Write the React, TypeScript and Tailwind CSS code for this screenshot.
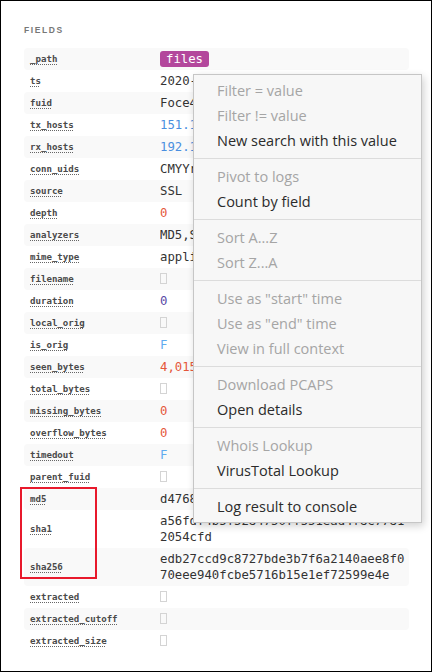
import React from 'react'

type Kind = 'badge' | 'str' | 'ip' | 'num' | 'dur' | 'bool' | 'empty'

interface Field {
  name: string
  kind: Kind
  value?: string
}

const fields: Field[] = [
  { name: '_path', kind: 'badge', value: 'files' },
  { name: 'ts', kind: 'str', value: '2020-04-12T01:33:51.522Z' },
  { name: 'fuid', kind: 'str', value: 'Foce4z2ZlVfzUwhxa3' },
  { name: 'tx_hosts', kind: 'ip', value: '151.101.1.69' },
  { name: 'rx_hosts', kind: 'ip', value: '192.168.1.110' },
  { name: 'conn_uids', kind: 'str', value: 'CMYYrm1TgqaZpA3Ew8' },
  { name: 'source', kind: 'str', value: 'SSL' },
  { name: 'depth', kind: 'num', value: '0' },
  { name: 'analyzers', kind: 'str', value: 'MD5,SHA1,SHA256,X509' },
  { name: 'mime_type', kind: 'str', value: 'application/x-x509-cert' },
  { name: 'filename', kind: 'empty' },
  { name: 'duration', kind: 'dur', value: '0' },
  { name: 'local_orig', kind: 'empty' },
  { name: 'is_orig', kind: 'bool', value: 'F' },
  { name: 'seen_bytes', kind: 'num', value: '4,015' },
  { name: 'total_bytes', kind: 'empty' },
  { name: 'missing_bytes', kind: 'num', value: '0' },
  { name: 'overflow_bytes', kind: 'num', value: '0' },
  { name: 'timedout', kind: 'bool', value: 'F' },
  { name: 'parent_fuid', kind: 'empty' },
  { name: 'md5', kind: 'str', value: 'd47685c1c0e3a2fd5e0e1bcd7f0a6b2e' },
  { name: 'sha1', kind: 'str', value: 'a56fdf4b5f5284750ff551ead4f8c77812054cfd' },
  {
    name: 'sha256',
    kind: 'str',
    value: 'edb27ccd9c8727bde3b7f6a2140aee8f070eee940fcbe5716b15e1ef72599e4e',
  },
  { name: 'extracted', kind: 'empty' },
  { name: 'extracted_cutoff', kind: 'empty' },
  { name: 'extracted_size', kind: 'empty' },
]

const menuGroups: Array<Array<{ label: string; enabled: boolean }>> = [
  [
    { label: 'Filter = value', enabled: false },
    { label: 'Filter != value', enabled: false },
    { label: 'New search with this value', enabled: true },
  ],
  [
    { label: 'Pivot to logs', enabled: false },
    { label: 'Count by field', enabled: true },
  ],
  [
    { label: 'Sort A...Z', enabled: false },
    { label: 'Sort Z...A', enabled: false },
  ],
  [
    { label: 'Use as "start" time', enabled: false },
    { label: 'Use as "end" time', enabled: false },
    { label: 'View in full context', enabled: false },
  ],
  [
    { label: 'Download PCAPS', enabled: false },
    { label: 'Open details', enabled: true },
  ],
  [
    { label: 'Whois Lookup', enabled: false },
    { label: 'VirusTotal Lookup', enabled: true },
  ],
  [{ label: 'Log result to console', enabled: true }],
]

function Value({ field }: { field: Field }) {
  if (field.kind === 'badge') {
    return (
      <span className="inline-block rounded-[3px] bg-[#b3479c] px-[6px] align-top leading-[16px] text-white">
        {field.value}
      </span>
    )
  }
  if (field.kind === 'empty') {
    return <span className="inline-block h-[11px] w-[7px] border border-[#d4d4d4] align-[-1px]" />
  }
  const color = {
    str: 'text-[#333333]',
    ip: 'text-[#4a8fe0]',
    num: 'text-[#e5573a]',
    dur: 'text-[#5849a6]',
    bool: 'text-[#5fabef]',
  }[field.kind]
  return <span className={color}>{field.value}</span>
}

export default function App() {
  return (
    <div className="relative h-[672px] w-[432px] overflow-hidden border border-black bg-white px-[23px] pt-[23px]">
      {/* Header */}
      <div className="mb-[12px] font-['Liberation_Sans',sans-serif] text-[8.5px] font-bold leading-[12px] tracking-[1.6px] text-[#777777]">
        FIELDS
      </div>

      {/* Field rows */}
      <div className="w-[385px] font-['DejaVu_Sans_Mono',monospace]">
        {fields.map((f, i) => (
          <div
            key={f.name}
            className={`flex items-center rounded-[4px] py-[3px] ${i % 2 === 0 ? 'bg-[#f9f9f9]' : ''}`}
          >
            <div className="w-[136px] shrink-0 pl-[6px] text-[9.1px] leading-[16px] font-semibold text-[#4a4a4a]">
              <span className="underline decoration-[#666] decoration-dotted underline-offset-[2px]">
                {f.name}
              </span>
            </div>
            <div className="w-[248px] overflow-hidden break-all text-[12.3px] leading-[16px]">
              <Value field={f} />
            </div>
          </div>
        ))}
      </div>

      {/* Annotation box */}
      <div className="absolute left-[19px] top-[486px] h-[92px] w-[77px] border-2 border-[#e8192c]" />

      {/* Context menu */}
      <div className="absolute left-[192px] top-[73px] w-[229px] border border-[#c6c6c6] bg-[#f7f7f7] py-[3px] font-['Open_Sans',sans-serif] text-[14.5px] shadow-[2px_3px_8px_rgba(0,0,0,0.18)]">
        {menuGroups.map((group, gi) => (
          <div key={gi}>
            {gi > 0 && <div className="my-[5px] h-px bg-[#dcdcdc]" />}
            {group.map(item => (
              <div
                key={item.label}
                className={`flex h-[25px] items-center whitespace-nowrap pl-[23px] ${item.enabled ? 'text-[#2b2b2b]' : 'text-[#a5a5a5]'}`}
              >
                {item.label}
              </div>
            ))}
          </div>
        ))}
      </div>
    </div>
  )
}
